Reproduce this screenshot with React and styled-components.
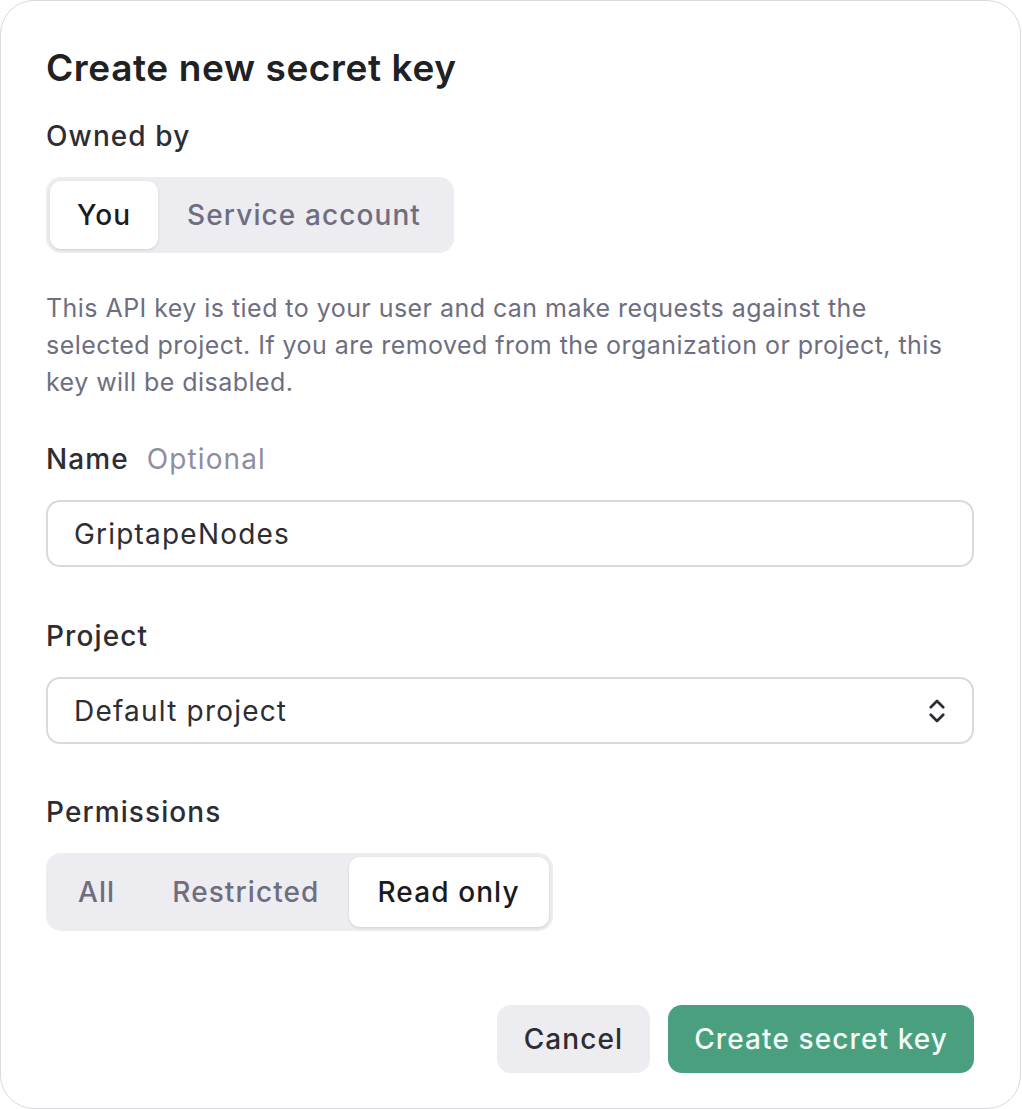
import React, { useState } from 'react';
import styled, { createGlobalStyle } from 'styled-components';

const GlobalStyle = createGlobalStyle`
  html, body {
    margin: 0;
    padding: 0;
    background: #ffffff;
  }
  * {
    box-sizing: border-box;
  }
`;

const Card = styled.div`
  width: 1021px;
  background: #fff;
  border: 1.5px solid #d9d9de;
  border-radius: 34px;
  padding: 45px 46px 35px 45px;
  font-family: Inter, "Noto Sans", sans-serif;
  color: #202123;
  display: flex;
  flex-direction: column;
`;

const Title = styled.h2`
  margin: 0 0 29px;
  font-size: 37px;
  line-height: 44px;
  font-weight: 600;
  letter-spacing: 0.6px;
  color: #202123;
`;

const Field = styled.div`
  display: flex;
  flex-direction: column;
  gap: 24px;
  margin-bottom: ${p => p.$mb || 0}px;
`;

const Label = styled.div`
  font-size: 28px;
  line-height: 34px;
  font-weight: 500;
  letter-spacing: 1.1px;
  color: #2d2d33;
  display: flex;
  gap: 18px;
`;

const Hint = styled.span`
  font-weight: 400;
  color: #8e8ea0;
`;

const Segmented = styled.div`
  display: inline-flex;
  align-self: flex-start;
  padding: 4px;
  background: #ececf1;
  border-radius: 15px;
  height: ${p => p.$h}px;
`;

const SegButton = styled.button`
  border: none;
  background: ${p => (p.$active ? '#fff' : 'transparent')};
  box-shadow: ${p => (p.$active ? '0 1px 3px rgba(0,0,0,0.12)' : 'none')};
  border-radius: 11px;
  padding: 0 ${p => p.$px || 28}px;
  font-family: inherit;
  font-size: 28px;
  font-weight: 500;
  letter-spacing: 1.1px;
  color: ${p => (p.$active ? '#1b1b1f' : '#6e6e80')};
  cursor: pointer;
`;

const Description = styled.p`
  margin: 0 0 41px;
  font-size: 25px;
  line-height: 37px;
  letter-spacing: 0.45px;
  color: #6e6e80;
`;

const InputBox = styled.div`
  height: 67px;
  border: 2px solid #d9d9e0;
  border-radius: 14px;
  display: flex;
  align-items: center;
  justify-content: space-between;
  padding: 0 20px 0 26px;
  font-size: 28px;
  letter-spacing: 1.2px;
  color: #2d2d33;
`;

const TextInput = styled.input`
  border: none;
  outline: none;
  background: transparent;
  font-family: inherit;
  font-size: 28px;
  letter-spacing: 1.2px;
  color: #2d2d33;
  width: 100%;
  padding: 0;
`;

const Footer = styled.div`
  display: flex;
  justify-content: flex-end;
  gap: 18px;
  margin-top: 74px;
`;

const Button = styled.button`
  height: 68px;
  border: none;
  border-radius: 14px;
  padding: 0 ${p => (p.$primary ? 26 : 27)}px;
  font-family: inherit;
  font-size: 28px;
  font-weight: 500;
  letter-spacing: 1.1px;
  cursor: pointer;
  background: ${p => (p.$primary ? '#4a9f7f' : '#ececf1')};
  color: ${p => (p.$primary ? '#f3fbf7' : '#2d2d33')};
`;

const ChevronIcon = () => (
  <svg width="30" height="30" viewBox="0 0 24 24" fill="none" stroke="#2d2d33" strokeWidth="2.2" strokeLinecap="round" strokeLinejoin="round">
    <path d="m7 15 5 5 5-5" />
    <path d="m7 9 5-5 5 5" />
  </svg>
);

export default function App() {
  const [owner, setOwner] = useState('you');
  const [perm, setPerm] = useState('read');
  const [name, setName] = useState('GriptapeNodes');

  return (
    <>
      <GlobalStyle />
      <Card>
        <Title>Create new secret key</Title>

        <Field $mb={37}>
          <Label>Owned by</Label>
          <Segmented $h={76}>
            <SegButton $active={owner === 'you'} $px={27} onClick={() => setOwner('you')}>You</SegButton>
            <SegButton $active={owner === 'service'} $px={29} onClick={() => setOwner('service')}>Service account</SegButton>
          </Segmented>
        </Field>

        <Description>
          This API key is tied to your user and can make requests against the selected project. If you are removed from the organization or project, this key will be disabled.
        </Description>

        <Field $mb={52}>
          <Label>Name <Hint>Optional</Hint></Label>
          <InputBox>
            <TextInput value={name} onChange={e => setName(e.target.value)} />
          </InputBox>
        </Field>

        <Field $mb={51}>
          <Label>Project</Label>
          <InputBox>
            <span>Default project</span>
            <ChevronIcon />
          </InputBox>
        </Field>

        <Field>
          <Label>Permissions</Label>
          <Segmented $h={78}>
            <SegButton $active={perm === 'all'} $px={28} onClick={() => setPerm('all')}>All</SegButton>
            <SegButton $active={perm === 'restricted'} $px={29} onClick={() => setPerm('restricted')}>Restricted</SegButton>
            <SegButton $active={perm === 'read'} $px={29} onClick={() => setPerm('read')}>Read only</SegButton>
          </Segmented>
        </Field>

        <Footer>
          <Button>Cancel</Button>
          <Button $primary>Create secret key</Button>
        </Footer>
      </Card>
    </>
  );
}
